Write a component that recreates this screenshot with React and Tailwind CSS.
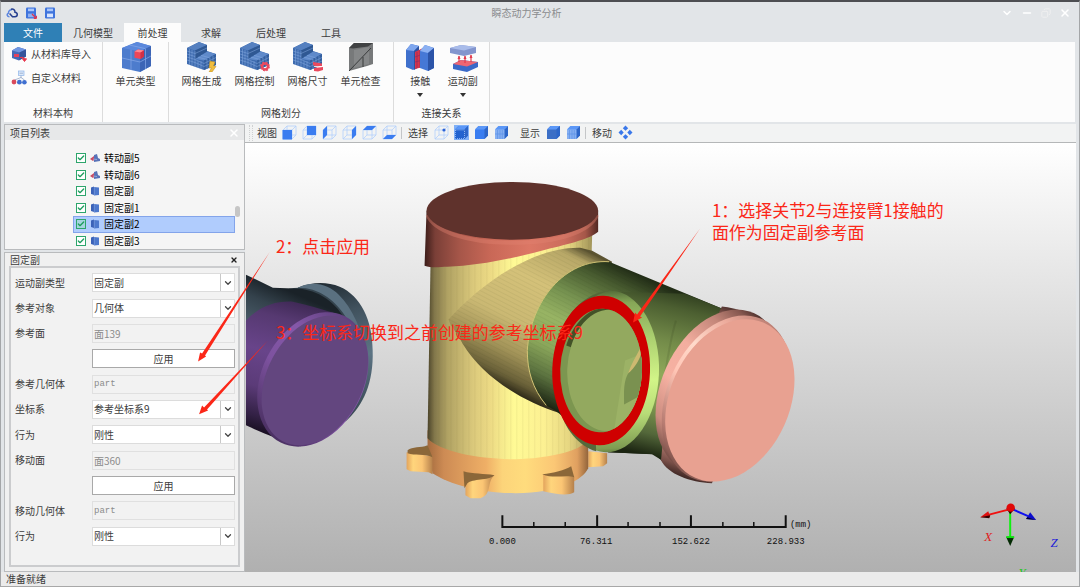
import React from "react";
import { Check, ChevronDown, X, Minus, Copy } from "lucide-react";

const TABS = [
  { name: "文件", cls: "w-[58px] bg-[#2f80b6] text-white" },
  { name: "几何模型", cls: "w-[62px]" },
  { name: "前处理", cls: "w-[57px] bg-[#fcfcfc]" },
  { name: "求解", cls: "w-[60px]" },
  { name: "后处理", cls: "w-[60px]" },
  { name: "工具", cls: "w-[60px]" },
];

const TREE = [
  { name: "转动副5", kind: "rotate" },
  { name: "转动副6", kind: "rotate" },
  { name: "固定副", kind: "fixed" },
  { name: "固定副1", kind: "fixed" },
  { name: "固定副2", kind: "fixed", selected: true },
  { name: "固定副3", kind: "fixed" },
];

const FIELDS = [
  { id: "joint-type", label: "运动副类型", type: "select", value: "固定副" },
  { id: "ref-object", label: "参考对象", type: "select", value: "几何体" },
  { id: "ref-face", label: "参考面", type: "text", value: "面139" },
  { id: "ref-apply", type: "button", value: "应用" },
  { id: "ref-part", label: "参考几何体", type: "text", value: "part", mono: true },
  { id: "csys", label: "坐标系", type: "select", value: "参考坐标系9" },
  { id: "ref-behavior", label: "行为", type: "select", value: "刚性" },
  { id: "mov-face", label: "移动面", type: "text", value: "面360" },
  { id: "mov-apply", type: "button", value: "应用" },
  { id: "mov-part", label: "移动几何体", type: "text", value: "part", mono: true },
  { id: "mov-behavior", label: "行为", type: "select", value: "刚性" },
];

function CloudIcon() {
  return (
    <svg className="size-3" viewBox="0 0 12 12" fill="none" strokeWidth="1.5">
      <path d="M3.5 9.8C1 9.8 .4 7 2.4 6.2C2.4 4 4 2.4 6 2.8" stroke="#5c86e0" />
      <path d="M5 2.2C7.4 1.4 9 3 9 5.2C12 5.4 12 9.8 9 9.8H6.5L3.6 6.4" stroke="#27408f" />
    </svg>
  );
}

function SaveIcon({ extra }) {
  return (
    <svg className="size-3" viewBox="0 0 12 12">
      <rect x="1" y=".5" width="10" height="11" rx="1.2" fill="#3f74dd" />
      <rect x="3" y="1.6" width="6" height="2.6" fill="#a9c6fa" />
      <rect x="3" y="6.6" width="6" height="3.6" fill={extra ? "#8fb0f0" : "#d6e4ff"} />
      {extra && <path d="M7 7L11 11M11.4 11.6V8.8M11.4 11.4H8.8" stroke="#e03450" strokeWidth="1.3" />}
    </svg>
  );
}

function ImportIcon() {
  return (
    <svg className="size-4" viewBox="0 0 16 16">
      <path d="M1 4.5L7 1L15 3.5V10.5L8 14.5L1 12Z" fill="#4568b5" />
      <path d="M1 4.5L7 1L15 3.5L8.5 6.5Z" fill="#6f96e2" />
      <path d="M8.5 6.5L15 3.5V10.5L8.5 14Z" fill="#35549c" />
      <rect x="3" y="8" width="5" height="3" fill="#e2405c" />
      <path d="M9 11.5Q13 10.5 13.5 13M13.5 15.5L11.5 12.8H15.5Z" stroke="#e8394f" fill="#e8394f" />
    </svg>
  );
}

function CustomIcon() {
  return (
    <svg className="size-4" viewBox="0 0 16 16">
      <rect x="7.5" y="1" width="5.5" height="4.5" fill="#dbe9fb" stroke="#8fb4e8" strokeWidth=".7" />
      <path d="M8.5 3.2H12M10 5.5V8M3.5 10L10 7.5L13.5 10" stroke="#93a6c6" strokeWidth=".8" fill="none" />
      <circle cx="3" cy="12" r="2.4" fill="#d94a5c" />
      <circle cx="8.4" cy="12.2" r="2.4" fill="#3f6fd0" />
      <circle cx="13.4" cy="12.2" r="2.3" fill="#3f6fd0" />
    </svg>
  );
}

function CubeIcon() {
  return (
    <svg className="size-[30px]" viewBox="0 0 30 30">
      <path d="M1 6L16 0L30 4V24L19 30L1 26Z" fill="#4d7ccd" />
      <path d="M1 6L16 0L30 4L19 9.5Z" fill="#5b88dc" />
      <path d="M19 9.5L30 4V24L19 30Z" fill="#3c65b6" />
      <path d="M10 7.7V28M1 16L19 20L30 14M24.5 7V27M8.5 3L24.5 6.7" stroke="#86a9e8" strokeWidth=".7" fill="none" />
      <path d="M13.5 9.5L17 7.500L23 8.500V14.500L19.500 17L13.500 15.800Z" fill="#ee4658" />
      <path d="M13.5 9.5L17 7.5L23 8.5L19.5 10.6Z" fill="#ff8790" />
      <path d="M19.5 10.6L23 8.5V14.5L19.5 17Z" fill="#d23046" />
    </svg>
  );
}

function MeshIcon({ badge }) {
  return (
    <svg className="size-[30px]" viewBox="0 0 30 30">
      <path d="M0 6L12 0L20 3V9L29 12V23L17 28L0 22Z" fill="#3f6caf" />
      <path d="M0 6L12 0L20 3L8 8.6Z" fill="#5580c0" />
      <path d="M8 17L20 9.5L29 12L17 18.5Z" fill="#5f8aca" />
      <path d="M8 8.6L20 3V9.5L8 17Z" fill="#2f5893" />
      <path d="M17 18.5L29 12V23L17 28Z" fill="#335f9f" />
      <path d="M0 9L8 11.5M0 12L8 14.5M0 15L8 17.5L17 21.5L29 15.5M0 18L8 20.5L17 24.5L29 19M2.5 7V23M5 8V24M8 9V25M11 19V26M14 19V27M20 17V27M23 15.5V25.5M26 14V24M8 11.5L20 6M11 15.2L20 17.5M14 13.3L23 16" stroke="#86abe0" strokeWidth=".5" fill="none" />
      {badge === "bolt" && <path d="M23 19L28 20L26.5 24L29 24.5L25 30H22L24.5 26H22Z" fill="#f0bd3e" stroke="#b98a1e" strokeWidth=".5" />}
      {badge === "gear" && (
        <g>
          <circle cx="25" cy="24.5" r="3" fill="none" stroke="#ea4a5e" strokeWidth="2.4" />
          <circle cx="25" cy="24.5" r="4.3" fill="none" stroke="#ea4a5e" strokeWidth="1.2" strokeDasharray="1.8 1.6" />
        </g>
      )}
      {badge === "size" && (
        <g fill="#ea4a5e">
          <path d="M20 20L29 21.5V24L23 24.5L20 23Z" />
          <path d="M21 26L30 25V28L25 29.5L21 29Z" />
          <path d="M21 24.5H29" stroke="#fff" strokeWidth=".8" />
        </g>
      )}
    </svg>
  );
}

function CheckPlateIcon() {
  return (
    <svg className="size-[30px]" viewBox="0 0 30 30">
      <path d="M3 6L8 1H27V22L21 24L3 29Z" fill="#77797a" />
      <path d="M3 6L8 1H27L22 4.5L7 6.500Z" fill="#404243" />
      <path d="M8 8L23 5V22L8 26Z" fill="#858788" />
      <path d="M3 29L25 6M17 15V25" stroke="#3a3c3d" strokeWidth="1" />
    </svg>
  );
}

function ContactIcon() {
  return (
    <svg className="size-[30px]" viewBox="0 0 30 30">
      <path d="M1 8L6 2L14 4V25L8 28L1 25Z" fill="#3f70cc" />
      <path d="M1 8L6 2L14 4L9 9Z" fill="#7ea6ee" />
      <path d="M9 9L14 4V25L9 28Z" fill="#2c52a2" />
      <path d="M10 10L18 6V25L10 27Z" fill="#d9354a" />
      <path d="M12 10V26M15 8V26M10 15L18 12M10 20L18 18" stroke="#8b2c63" strokeWidth=".7" />
      <path d="M15 9L20 3L29 6V26L23 29L15 26Z" fill="#4678d6" />
      <path d="M15 9L20 3L29 6L23 11Z" fill="#8bb0f2" />
      <path d="M23 11L29 6V26L23 29Z" fill="#2c54a8" />
    </svg>
  );
}

function JointIcon() {
  return (
    <svg className="size-[30px]" viewBox="0 0 30 30">
      <path d="M2 6L13 3L28 5V11L16 14L2 11Z" fill="#8395cd" />
      <path d="M2 6L13 3L28 5L16 8.500Z" fill="#a9bcea" />
      <path d="M5 22L13 18L30 20V25L19 30L5 27Z" fill="#3a69c8" />
      <path d="M5 22L13 18L30 20L19 24.5Z" fill="#ed6673" />
      <path d="M11 20V14M17 21V14M23 20V13" stroke="#e23a4c" strokeWidth="1.2" />
      <path d="M9.500 17L11 13.500L12.500 17ZM15.500 17L17 13.500L18.500 17ZM21.500 16L23 12.500L24.500 16Z" fill="#e23a4c" />
    </svg>
  );
}

function TreeIcon({ kind }) {
  return kind === "rotate" ? (
    <svg className="h-[10px] w-[10px]" viewBox="0 0 10 10">
      <path d="M0 6L4 3L5 6L3 8Z" fill="#c94a62" />
      <path d="M4 2L7 1L8 5L10 6V8L4 9Z" fill="#5873b8" />
      <path d="M3 6L7 6.500" stroke="#b0bde2" strokeWidth=".7" />
    </svg>
  ) : (
    <svg className="h-[10px] w-[10px]" viewBox="0 0 10 10">
      <path d="M1 1.5L4 .5V9L1 8Z" fill="#3b62b8" />
      <path d="M4 1L9 1.5V9L4 9.5Z" fill="#4d78cc" />
      <path d="M4.3 1V9.4" stroke="#8faae0" strokeWidth=".5" />
    </svg>
  );
}

/* Wire cube of the view tool bar with one side filled */
function ViewCube({ side }) {
  const fills = {
    front: "M.5 5H10V14.500H.5Z",
    back: "M5 1H14V10H5Z",
    left: "M1 5L5 1V10L1 14Z",
    right: "M10 5L14 1V10L10 14Z",
    top: "M1 5L5 1H14L10 5Z",
    bottom: "M1 14L5 10H14L10 14Z",
  };
  return (
    <svg className="size-[15px]" viewBox="0 0 15 15">
      <path d="M1 5H10V14H1ZM5 1H14V10H5ZM1 5L5 1M10 5L14 1M10 14L14 10M1 14L5 10" fill="none" stroke="#b2cffb" strokeWidth=".8" />
      {fills[side] && <path d={fills[side]} fill="#3a7cf0" />}
      {side === "point" && <circle cx="10" cy="5" r="1.6" fill="#2a62d8" />}
    </svg>
  );
}

function SolidCube({ tone }) {
  const front = tone === "dark" ? "#3c6fc6" : tone === "edge" ? "#2363cf" : tone === "mesh" ? "#86b0f2" : "#3a7df0";
  return (
    <svg className="size-[15px]" viewBox="0 0 15 15">
      {tone === "edge" && <rect width="15" height="15" fill="#7fb0f8" />}
      <path d="M1 4.5L4.5 1H14V10.5L10.5 14H1Z" fill={front} />
      <path d="M1 4.5L4.5 1H14L10.5 4.5Z" fill="#5b97f7" />
      <path d="M10.5 4.5L14 1V10.5L10.5 14Z" fill="#2d66c8" />
      {tone === "mesh" && <path d="M3.5 5V14M6 5V14M8.3 5V14M1 9H10.5" stroke="#5d92e6" strokeWidth=".7" />}
      {tone === "edge" && <path d="M1.5 5H10.5V13.5H1.5Z" stroke="#b9d6ff" strokeDasharray="1 1" strokeWidth=".7" fill="none" />}
    </svg>
  );
}

function MoveIcon() {
  return (
    <svg className="size-[15px]" viewBox="0 0 15 15" fill="#3a78ea">
      <path d="M7.5 .5L10.2 3.2L7.5 5.7L4.8 3.2ZM7.5 9.3L10.2 11.8L7.5 14.5L4.8 11.8ZM.5 7.5L3.2 4.8L5.7 7.5L3.2 10.2ZM9.3 7.5L11.8 4.8L14.5 7.5L11.8 10.2Z" />
    </svg>
  );
}

function BigButton({ icon, label, menu }) {
  return (
    <button type="button" className="flex w-full flex-col items-center">
      {icon}
      <span className="mt-px leading-4 whitespace-nowrap">{label}</span>
      {menu && <span className="mt-1 border-x-[3px] border-t-4 border-x-transparent border-t-[#333]" />}
    </button>
  );
}

function Group({ label, className, children }) {
  return (
    <section className={"flex flex-col justify-between border-r border-[#dcdcdc] pb-px " + className}>
      <div>{children}</div>
      <h2 className="text-center leading-4">{label}</h2>
    </section>
  );
}

function Ribbon() {
  return (
    <div className="mr-1 ml-[3px] flex h-20 bg-[#fcfcfc]">
      <Group label="材料本构" className="w-[99px]">
        <button type="button" className="mt-1 flex h-4 items-center gap-1 pl-[7px]">
          <ImportIcon />
          <span className="whitespace-nowrap">从材料库导入</span>
        </button>
        <button type="button" className="mt-2 flex h-4 items-center gap-1 pl-[7px]">
          <CustomIcon />
          <span>自定义材料</span>
        </button>
      </Group>
      <Group label="" className="w-[66px]">
        <BigButton icon={<CubeIcon />} label="单元类型" />
      </Group>
      <Group label="网格划分" className="w-[225px]">
        <div className="grid grid-cols-4 px-[6px]">
          <BigButton icon={<MeshIcon badge="bolt" />} label="网格生成" />
          <BigButton icon={<MeshIcon badge="gear" />} label="网格控制" />
          <BigButton icon={<MeshIcon badge="size" />} label="网格尺寸" />
          <BigButton icon={<CheckPlateIcon />} label="单元检查" />
        </div>
      </Group>
      <Group label="连接关系" className="w-[96px]">
        <div className="grid grid-cols-2 px-[5px]">
          <BigButton icon={<ContactIcon />} label="接触" menu />
          <BigButton icon={<JointIcon />} label="运动副" menu />
        </div>
      </Group>
    </div>
  );
}

function ViewToolbar() {
  return (
    <div className="flex h-[19px] items-center border-b border-[#b5b7b8] bg-[#f2f3f3] pb-px pl-1">
      <span className="h-4 w-1 border-x border-dotted border-[#cfd1d2]" />
      <span className="mr-[5px] ml-1">视图</span>
      <div className="flex gap-[5px]">
        {["front", "back", "left", "right", "top", "bottom"].map((s) => (
          <button key={s} type="button" aria-label={s}><ViewCube side={s} /></button>
        ))}
      </div>
      <span className="ml-1 h-3 border-l border-[#c4c6c8]" />
      <span className="mx-[6px]">选择</span>
      <div className="flex gap-[5px]">
        <button type="button" aria-label="point"><ViewCube side="point" /></button>
        <button type="button" aria-label="edge"><SolidCube tone="edge" /></button>
        <button type="button" aria-label="face"><SolidCube tone="face" /></button>
        <button type="button" aria-label="mesh"><SolidCube tone="mesh" /></button>
      </div>
      <span className="mr-[6px] ml-[11px]">显示</span>
      <div className="flex gap-[5px]">
        <button type="button" aria-label="solid"><SolidCube tone="dark" /></button>
        <button type="button" aria-label="wire"><SolidCube tone="mesh" /></button>
      </div>
      <span className="ml-1 h-3 border-l border-[#c4c6c8]" />
      <span className="mx-[6px]">移动</span>
      <button type="button" aria-label="pan"><MoveIcon /></button>
    </div>
  );
}

function ProjectPanel() {
  return (
    <section className="border border-[#b9bbbd] bg-[#f5f5f5]">
      <header className="flex h-[15px] items-center justify-between bg-[#e7e8e9] pr-1 pl-[5px]">
        <h2>项目列表</h2>
        <button type="button" aria-label="close list"><X className="size-3 text-white" strokeWidth={3} /></button>
      </header>
      <div className="mt-[10px] flex">
        <ul className="ml-[68px] grid h-[99px] flex-1 grid-rows-6 text-black">
          {TREE.map((t) => (
            <li key={t.name} className={"flex items-center border pl-[2px] " + (t.selected ? "border-[#83a4ea] bg-[#b0ccfd]" : "border-transparent")}>
              <label className="flex items-center">
                <span className="relative flex size-[10px]">
                  <input type="checkbox" defaultChecked className={"size-[10px] appearance-none border border-[#2da56c] " + (t.selected ? "bg-[#a5d4e0]" : "bg-white")} />
                  <Check className="pointer-events-none absolute inset-px size-2 text-[#1f9e5e]" strokeWidth={4} />
                </span>
                <span className="mr-1 ml-1"><TreeIcon kind={t.kind} /></span>
                <span>{t.name}</span>
              </label>
            </li>
          ))}
        </ul>
        <div className="w-[9px] pt-14"><div className="h-[11px] w-[5px] rounded-sm bg-[#c6c6c6]" /></div>
      </div>
    </section>
  );
}

function Field({ f }) {
  if (f.type === "button") {
    return (
      <div className="flex items-center pl-[81px]">
        <button type="button" className="h-[19px] flex-1 border border-[#a9a9a9] bg-white leading-4">{f.value}</button>
      </div>
    );
  }
  return (
    <div className="flex items-center">
      <label htmlFor={f.id} className="w-[81px] pl-1">{f.label}</label>
      {f.type === "select" ? (
        <span className="relative flex flex-1">
          <select id={f.id} className="h-[19px] w-full appearance-none border border-[#dcdcdc] bg-white pl-px leading-4">
            <option>{f.value}</option>
          </select>
          <span className="pointer-events-none absolute inset-y-px right-px flex w-[14px] items-center justify-center border-l border-[#c8c8c8]">
            <ChevronDown className="size-[10px] text-[#444]" strokeWidth={3} />
          </span>
        </span>
      ) : (
        <input
          id={f.id}
          disabled
          defaultValue={f.value}
          className={"h-[19px] min-w-0 flex-1 border border-[#e0e0e0] bg-[#f2f2f2] pl-px text-[#8c8c8c] " + (f.mono ? "font-['Liberation_Mono',monospace] text-[9px]" : "")}
        />
      )}
    </div>
  );
}

function JointPanel() {
  return (
    <section className="flex flex-1 flex-col border border-[#b9bbbd] bg-[#f0f0f0] px-1 pb-1">
      <header className="flex h-[13px] items-center justify-between pr-[2px] pl-px">
        <h2>固定副</h2>
        <button type="button" aria-label="close panel"><X className="size-2 text-[#222]" strokeWidth={4} /></button>
      </header>
      <form className="flex-1 border-2 border-[#cbccce] bg-[#f2f2f2] pt-[2px] pr-[3px]">
        <div className="grid h-[279px] auto-rows-fr">
          {FIELDS.map((f) => <Field key={f.id} f={f} />)}
        </div>
      </form>
    </section>
  );
}

function Stops({ list }) {
  return list.map(([o, c]) => <stop key={o} offset={o} stopColor={c} />);
}

function Scene() {
  return (
    <svg className="absolute inset-0 size-full" viewBox="245 142 831 430" preserveAspectRatio="xMidYMid meet" aria-label="模型">
      <defs>
        <linearGradient id="yel" gradientUnits="userSpaceOnUse" x1="427" y1="0" x2="594" y2="0">
          <Stops list={[[0, "#4a432a"], [0.04, "#81764a"], [0.12, "#b0a263"], [0.28, "#dcca7c"], [0.38, "#eddb85"], [0.52, "#fffa95"], [0.7, "#fcf092"], [0.85, "#e6d681"], [1, "#9b8e55"]]} />
        </linearGradient>
        <linearGradient id="org" gradientUnits="userSpaceOnUse" x1="427" y1="0" x2="590" y2="0">
          <Stops list={[[0, "#a46b3e"], [0.1, "#cd8b54"], [0.36, "#efaf66"], [0.46, "#fcd47a"], [0.6, "#ffdc7d"], [0.78, "#fbc775"], [0.92, "#e0a060"], [1, "#855a35"]]} />
        </linearGradient>
        <linearGradient id="lug" x1="0" x2="1">
          <Stops list={[[0, "#e3a45d"], [0.25, "#ffd57c"], [0.6, "#fbc574"], [1, "#b5804b"]]} />
        </linearGradient>
        <linearGradient id="red" gradientUnits="userSpaceOnUse" x1="424" y1="0" x2="599" y2="0">
          <Stops list={[[0, "#3b1c19"], [0.06, "#7a3f37"], [0.2, "#a65649"], [0.38, "#c96857"], [0.6, "#dc7765"], [0.8, "#cc6d5d"], [0.92, "#a65749"], [1, "#4b2520"]]} />
        </linearGradient>
        <linearGradient id="tan" gradientUnits="userSpaceOnUse" x1="572" y1="243" x2="500" y2="389">
          <Stops list={[[0, "#5c5432"], [0.07, "#b7a767"], [0.3, "#d4c179"], [0.58, "#cab873"], [0.76, "#a39459"], [0.91, "#696038"], [1, "#211d11"]]} />
        </linearGradient>
        <linearGradient id="grn" gradientUnits="userSpaceOnUse" x1="645" y1="277" x2="574" y2="422">
          <Stops list={[[0, "#222d17"], [0.12, "#475a2f"], [0.3, "#769250"], [0.47, "#98b464"], [0.65, "#8ba75b"], [0.82, "#5c7340"], [1, "#151c0e"]]} />
        </linearGradient>
        <linearGradient id="grn2" gradientUnits="userSpaceOnUse" x1="690" y1="290" x2="650" y2="456">
          <Stops list={[[0, "#2c3a1d"], [0.12, "#4c5f31"], [0.32, "#738b49"], [0.52, "#8fa95a"], [0.7, "#80994f"], [0.87, "#53673a"], [1, "#1b2411"]]} />
        </linearGradient>
        <linearGradient id="collar" gradientUnits="userSpaceOnUse" x1="625" y1="288" x2="640" y2="454">
          <Stops list={[[0, "#536b38"], [0.08, "#86a757"], [0.3, "#acd070"], [0.55, "#d2f588"], [0.75, "#b8dc78"], [0.95, "#7e9c52"], [1, "#4d6234"]]} />
        </linearGradient>
        <linearGradient id="pnk" gradientUnits="userSpaceOnUse" x1="740" y1="306" x2="680" y2="480">
          <Stops list={[[0, "#3b2422"], [0.08, "#85574f"], [0.2, "#c38679"], [0.4, "#f3ae9f"], [0.6, "#f6b1a2"], [0.8, "#cd8d80"], [0.92, "#7b514a"], [1, "#2c1a18"]]} />
        </linearGradient>
        <linearGradient id="pnkEdge" gradientUnits="userSpaceOnUse" x1="765" y1="320" x2="690" y2="482">
          <Stops list={[[0, "#b67a6f"], [0.2, "#ecaa9b"], [0.42, "#ffdacb"], [0.6, "#ffc5b5"], [0.85, "#b57a70"], [1, "#67413b"]]} />
        </linearGradient>
        <linearGradient id="pur" gradientUnits="userSpaceOnUse" x1="300" y1="300" x2="262" y2="440">
          <Stops list={[[0, "#3d2753"], [0.15, "#563971"], [0.4, "#68448a"], [0.65, "#5b3b78"], [0.85, "#322044"], [1, "#0e0813"]]} />
        </linearGradient>
        <linearGradient id="purEdge" gradientUnits="userSpaceOnUse" x1="330" y1="312" x2="290" y2="446">
          <Stops list={[[0, "#60407e"], [0.3, "#8558a9"], [0.6, "#7d529f"], [1, "#4a3062"]]} />
        </linearGradient>
        <linearGradient id="slate" gradientUnits="userSpaceOnUse" x1="265" y1="280" x2="245" y2="325">
          <Stops list={[[0, "#1a2228"], [0.4, "#34424c"], [1, "#4c5f6c"]]} />
        </linearGradient>
        <linearGradient id="slate2" gradientUnits="userSpaceOnUse" x1="325" y1="282" x2="368" y2="410">
          <Stops list={[[0, "#222d35"], [0.25, "#40515d"], [0.6, "#5c7484"], [1, "#394954"]]} />
        </linearGradient>
        <pattern id="facets" width="6" height="10" patternUnits="userSpaceOnUse">
          <path d="M.5 0V10" stroke="#5e5220" strokeOpacity=".08" />
        </pattern>
        <pattern id="facetsArm" width="10" height="4" patternUnits="userSpaceOnUse" patternTransform="rotate(27)">
          <path d="M0 .5H10" stroke="#1c2008" strokeOpacity=".05" />
        </pattern>
      </defs>

      {/* left arm */}
      <path d="M297 287C312 281 326 281 339 286C360 295 372 320 372 350C373 382 363 405 345 421L300 420Z" fill="url(#slate2)" />
      <path d="M297 287C312 279 328 284 338 294C352 308 362 330 364 352L352 350C345 325 330 300 297 287Z" fill="#5a7080" />
      <path d="M288 288C312 283 332 297 342 312C349 322 354 334 356 346L300 340Z" fill="#34434d" />
      <path d="M245 274L272 287L300 288C322 291 338 305 348 325L245 340Z" fill="url(#slate)" />
      <path d="M245 320C258 306 274 300 292 301C306 304 320 308 335 313L300 446C280 440 262 433 245 425Z" fill="url(#pur)" />
      <ellipse cx="312" cy="379" rx="51" ry="71" transform="rotate(27 312 379)" fill="url(#purEdge)" />
      <ellipse cx="314" cy="380" rx="48" ry="69" transform="rotate(28 314 380)" fill="#63467f" />

      {/* base */}
      <path d="M588 451L607 453V463L603 466L588 467Z" fill="url(#lug)" />
      <path d="M427 430H588V468C583 479 560 493 515 493C483 493 450 485 432 473L427 450Z" fill="url(#org)" />
      <path d="M406 452L432 456V474L428 472L410 471L406 469Z" fill="url(#lug)" />
      <path d="M407 450C412 446 420 448 427 445L432 457C424 453 414 456 407 453Z" fill="#8b6739" />
      <path d="M465 476L494 475C486 482 492 494 480 498H470L465 495Z" fill="url(#lug)" />
      <path d="M463 471C472 474 484 473 494 475C488 481 472 478 467 483L464 488Z" fill="#8b6739" />
      <path d="M543 474L574 476V492C568 496 556 494 543 491Z" fill="url(#lug)" />
      <path d="M542 474C554 473 564 470 571 466L574 477C566 474 554 479 542 474Z" fill="#8b6739" />

      {/* column */}
      <path d="M430 262L427 438C440 452 480 459 515 459C548 458 575 452 586 442L592 234Z" fill="url(#yel)" />
      <path d="M430 262L427 438C440 452 480 459 515 459C548 458 575 452 586 442L592 234Z" fill="url(#facets)" />
      <path d="M426 210L424 265C432 268 440 266 447 266C480 265 515 257 545 249C570 243 590 238 598 231V210Z" fill="url(#red)" />
      <path d="M427 214C433 230 465 242 512 242C560 242 590 230 597 214" fill="none" stroke="#e08371" strokeOpacity=".4" strokeWidth="4" />
      <ellipse cx="512" cy="210" rx="86" ry="29" fill="#5f322c" />

      {/* tan arm */}
      <path d="M448 319C478 286 530 246 580 247L592 250L612 261L560 413C520 400 482 376 462 343C456 331 450 326 448 319Z" fill="url(#tan)" />
      <path d="M448 319C478 286 530 246 580 247L592 250L612 261L560 413C520 400 482 376 462 343C456 331 450 326 448 319Z" fill="url(#facetsArm)" />

      {/* green arm */}
      <path d="M609 261L722 308L672 470L655 454L608 452C590 444 568 420 556 411L546 405C532 388 527 370 527 350C530 300 565 258 609 261Z" fill="url(#grn)" />
      <path d="M609 261L722 308L672 470L655 454L608 452C590 444 568 420 556 411L546 405C532 388 527 370 527 350C530 300 565 258 609 261Z" fill="url(#facetsArm)" />
      <path d="M609 261C565 258 530 300 527 350C527 370 532 388 546 405" fill="none" stroke="#d3c475" strokeWidth="1" />
      <path d="M615 291L685 293L722 308L665 462L652 454L608 452Z" fill="url(#grn2)" />
      <path d="M676 320C668 345 665 380 657 420" fill="none" stroke="#1e2814" strokeOpacity=".12" strokeWidth="2" />

      {/* collar and picked face */}
      <ellipse cx="608" cy="371" rx="51" ry="81" transform="rotate(2 608 371)" fill="url(#collar)" />
      <path d="M610 290C585 291 558 315 553 362L558 405C565 430 578 445 596 451L590 300C596 294 602 292 610 290Z" fill="#55693b" />
      <ellipse cx="601" cy="370" rx="49" ry="75" transform="rotate(2 601 370)" fill="#cf0000" />
      <ellipse cx="601" cy="370" rx="41" ry="62" transform="rotate(2 601 370)" fill="#7c9650" />
      <clipPath id="hole"><ellipse cx="601" cy="370" rx="41" ry="62" transform="rotate(2 601 370)" /></clipPath>
      <g clipPath="url(#hole)">
        <path d="M612 305C588 305 572 325 566 345L580 350L612 312Z" fill="#435228" />
        <ellipse cx="608" cy="370" rx="41" ry="61" transform="rotate(2 608 370)" fill="#93a95f" />
        <path d="M625 360L614 430H650V350Z" fill="#9cb266" />
        <path d="M645 344L628 373C623 382 624 394 624 404L650 390Z" fill="#7a9150" />
        <path d="M641 346C636 356 631 364 628 373C635 367 640 359 642 350Z" fill="#cdb970" />
      </g>

      {/* end cap */}
      <path d="M722 306C746 308 768 323 780 336L712 483C690 482 668 474 661 460L664 430Z" fill="url(#pnk)" />
      <ellipse cx="719" cy="391" rx="58" ry="86" transform="rotate(24 719 391)" fill="url(#pnk)" />
      <ellipse cx="727" cy="398" rx="60" ry="87" transform="rotate(24 727 398)" fill="url(#pnkEdge)" />
      <ellipse cx="730" cy="400" rx="60" ry="85" transform="rotate(24 730 400)" fill="#e8a191" />

      {/* scale */}
      <path d="M502 515V527H786V515M597 515V527M691 515V527" fill="none" stroke="#111" strokeWidth="2" />
      <path d="M533.5 522V527M565 522V527M628 522V527M660 522V527M723 522V527M754 522V527" stroke="#111" strokeWidth="1.5" />
      <g className="font-['Liberation_Mono',monospace] text-[9px]" fill="#111" textAnchor="middle">
        <text x="502" y="544">0.000</text>
        <text x="596" y="544">76.311</text>
        <text x="691" y="544">152.622</text>
        <text x="786" y="544">228.933</text>
        <text x="801" y="527">(mm)</text>
      </g>

      {/* axes */}
      <path d="M1011 509L988 515" stroke="#f01010" strokeWidth="2" />
      <path d="M981 517L989 511L991 517Z" fill="#e01010" />
      <path d="M981 517L991 515L990 518Z" fill="#300" />
      <path d="M1013 509L1029 516" stroke="#1010f0" strokeWidth="2" />
      <path d="M1037 520L1027 519L1031 512Z" fill="#0c0ccc" />
      <path d="M1037 520L1027 519L1028 517Z" fill="#003" />
      <path d="M1011 512V538" stroke="#10f010" strokeWidth="2" />
      <path d="M1007 537H1015L1011 546Z" fill="#032a03" />
      <path d="M1007 536H1015V538H1007Z" fill="#12e012" />
      <path d="M1007 508H1016L1011 514Z" fill="#300" />
      <circle cx="1011.5" cy="507.5" r="4.2" fill="#e00808" />
      <g className="font-['Liberation_Serif',serif] text-[13px] italic" textAnchor="middle">
        <text x="989" y="541" fill="#e02020">X</text>
        <text x="1055" y="547" fill="#2020d8">Z</text>
        <text x="1023" y="577" fill="#20c820">Y</text>
      </g>
    </svg>
  );
}

function Annotations() {
  return (
    <svg className="pointer-events-none absolute inset-0 z-10 size-full overflow-visible" viewBox="245 142 831 430" preserveAspectRatio="xMidYMid meet" fill="#fb2718">
      <path d="M700 228L637 314L635 312L633 322L642 317L640 316Z" />
      <path d="M269 251L201 353L199 352L197 361L205 356L204 355Z" />
      <path d="M267 340L203 407L201 405L198 414L207 410L206 409Z" />
      <foreignObject x="712" y="198" width="260" height="50">
        <p className="font-['Noto_Sans_CJK_SC',sans-serif] text-[17px] leading-[22px] text-[#fb2718]">
          1：选择关节2与连接臂1接触的
          <br />
          面作为固定副参考面
        </p>
      </foreignObject>
      <g className="font-['Noto_Sans_CJK_SC',sans-serif] text-[17px]">
        <text x="275" y="252">2：点击应用</text>
        <text x="275" y="338">3：坐标系切换到之前创建的参考坐标系9</text>
      </g>
    </svg>
  );
}

export default function App() {
  return (
    <div className="flex min-h-screen flex-col border-x border-t-2 border-x-[#a4a6a8] border-t-[#4d4e52] bg-[#e2e5e8] font-['Noto_Sans_CJK_SC',sans-serif] text-[10px] leading-3 text-[#3c3c3c]">
      <header className="flex h-[21px] items-center pr-1 pl-[5px]">
        <div className="flex gap-[7px]">
          <button type="button" aria-label="home"><CloudIcon /></button>
          <button type="button" aria-label="save as"><SaveIcon extra /></button>
          <button type="button" aria-label="save"><SaveIcon /></button>
        </div>
        <h1 className="flex-1 text-center text-[#8a8c8e]">瞬态动力学分析</h1>
        <div className="flex gap-2 px-1 text-white">
          <button type="button" aria-label="collapse"><ChevronDown className="size-3" strokeWidth={3} /></button>
          <button type="button" aria-label="minimize"><Minus className="size-3" strokeWidth={3} /></button>
          <button type="button" aria-label="restore"><Copy className="size-[10px] -scale-x-100 text-[#f0f0f0]" /></button>
          <button type="button" aria-label="close"><X className="size-3" strokeWidth={3} /></button>
        </div>
      </header>
      <nav className="mx-[3px] flex h-[19px]">
        {TABS.map((t) => (
          <button key={t.name} type="button" className={"h-full " + t.cls}>{t.name}</button>
        ))}
      </nav>
      <Ribbon />
      <main className="flex flex-1 pt-[2px] pr-[3px] pl-[3px]">
        <aside className="flex w-[241px] flex-col gap-[2px]">
          <ProjectPanel />
          <JointPanel />
        </aside>
        <div className="flex flex-1 flex-col">
          <ViewToolbar />
          <div className="relative flex-1 bg-linear-to-b from-white to-[#b0b0b0]">
            <Scene />
            <Annotations />
          </div>
        </div>
      </main>
      <footer className="h-[15px] border-b border-[#a8a8a8] bg-[#ebebeb] pl-[5px] leading-[14px]">准备就绪</footer>
    </div>
  );
}
